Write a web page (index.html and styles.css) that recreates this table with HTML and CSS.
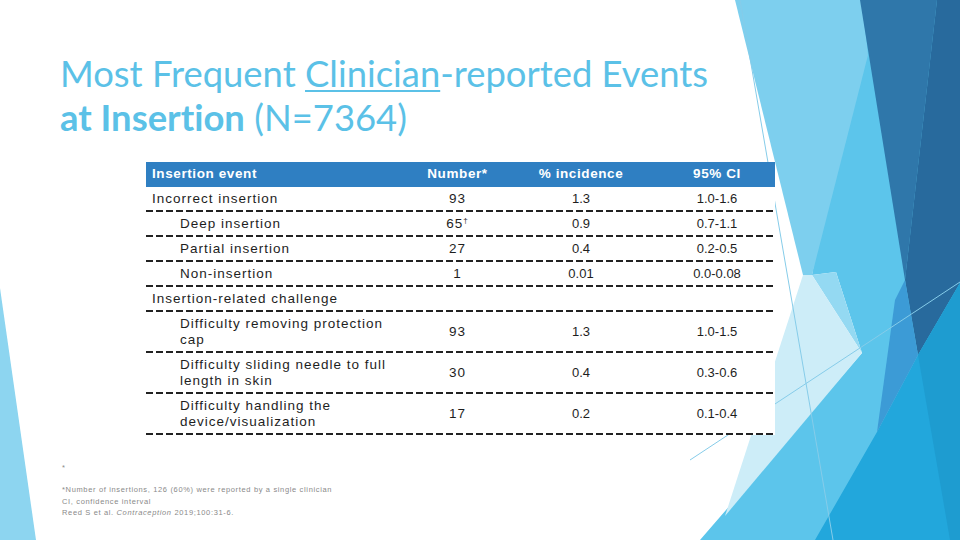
FILE: index.html
```html
<!DOCTYPE html>
<html>
<head>
<meta charset="utf-8">
<link rel="stylesheet" href="styles.css">
</head>
<body>
<div class="slide">
  <svg class="bg" viewBox="0 0 960 540" width="960" height="540" aria-hidden="true">
    <polygon points="0,288 36,540 0,540" fill="#8dd5f0"/>
    <polygon points="860,0 960,0 960,540 700,540 862,353 836,272 812,275" fill="#5cc5eb"/>
    <polygon points="812,275 836,272 862,353" fill="#94d9f2"/>
    <polygon points="735,0 862,0 868,55 812,275 803,275" fill="#7dcfee"/>
    <polygon points="803,275 812,275 862,353 725,516" fill="#cdedf8"/>
    <polygon points="860,0 937,0 905,280" fill="#2f77aa"/>
    <polygon points="937,0 960,0 960,283 918,355 905,280" fill="#286a9d"/>
    <polygon points="815,540 877,432 918,355 960,283 960,540" fill="#22a7dc"/>
    <polygon points="877,432 895,300 905,280 918,355" fill="#3c9bd6"/>
    <polygon points="918,355 960,283 960,540 950,540" fill="#1e9cd0"/>
    <line x1="740" y1="0" x2="833" y2="540" stroke="#86cce9" stroke-width="1"/>
    <line x1="690" y1="460" x2="960" y2="282" stroke="#86cce9" stroke-width="1"/>
  </svg>
  <div class="content">
    <h1 class="title">Most Frequent <span class="ul">Clinician</span>-reported Events<br><b>at Insertion</b> (N=7364)</h1>
    <div class="tbl">
      <div class="row head">
        <div class="c1">Insertion event</div>
        <div class="c2">Number*</div>
        <div class="c3">% incidence</div>
        <div class="c4">95% CI</div>
      </div>
      <div class="row">
        <div class="c1">Incorrect insertion</div>
        <div class="c2">93</div>
        <div class="c3">1.3</div>
        <div class="c4">1.0-1.6</div>
      </div>
      <div class="row">
        <div class="c1 ind">Deep insertion</div>
        <div class="c2">65<sup>†</sup></div>
        <div class="c3">0.9</div>
        <div class="c4">0.7-1.1</div>
      </div>
      <div class="row">
        <div class="c1 ind">Partial insertion</div>
        <div class="c2">27</div>
        <div class="c3">0.4</div>
        <div class="c4">0.2-0.5</div>
      </div>
      <div class="row">
        <div class="c1 ind">Non-insertion</div>
        <div class="c2">1</div>
        <div class="c3">0.01</div>
        <div class="c4">0.0-0.08</div>
      </div>
      <div class="row">
        <div class="c1">Insertion-related challenge</div>
        <div class="c2"></div>
        <div class="c3"></div>
        <div class="c4"></div>
      </div>
      <div class="row">
        <div class="c1 ind">Difficulty removing protection<br>cap</div>
        <div class="c2">93</div>
        <div class="c3">1.3</div>
        <div class="c4">1.0-1.5</div>
      </div>
      <div class="row">
        <div class="c1 ind">Difficulty sliding needle to full<br>length in skin</div>
        <div class="c2">30</div>
        <div class="c3">0.4</div>
        <div class="c4">0.3-0.6</div>
      </div>
      <div class="row">
        <div class="c1 ind">Difficulty handling the<br>device/visualization</div>
        <div class="c2">17</div>
        <div class="c3">0.2</div>
        <div class="c4">0.1-0.4</div>
      </div>
    </div>
    <div class="notes">
      <p class="star">*</p>
      <p>*Number of insertions, 126 (60%) were reported by a single clinician<br>CI, confidence interval<br>Reed S et al. <i>Contraception</i> 2019;100:31-6.</p>
    </div>
  </div>
</div>
</body>
</html>
```
FILE: styles.css
```css
html, body {
  margin: 0;
  padding: 0;
  background: #fff;
}
.slide {
  position: relative;
  width: 960px;
  height: 540px;
  overflow: hidden;
  background: #fff;
}
.bg {
  position: absolute;
  left: 0;
  top: 0;
}
.content {
  position: relative;
  padding-top: 51px;
}
.title {
  margin: 0 0 0 60px;
  font-family: "Lato", "Open Sans", sans-serif;
  font-weight: 400;
  font-size: 36.4px;
  line-height: 44px;
  color: #5bc1e7;
  font-variant-ligatures: none;
}
.title b {
  font-weight: 700;
}
.ul {
  text-decoration: underline;
  text-decoration-thickness: 2px;
  text-underline-offset: 3px;
}
.tbl {
  margin: 23px 0 0 146px;
  width: 629px;
  background: #fff;
  font-family: "Liberation Sans", Arial, sans-serif;
  font-size: 13px;
  color: #1e1e1e;
}
.row {
  display: grid;
  grid-template-columns: 254px 115px 132px 128px;
  align-items: center;
  padding: 4px 0 5px;
  line-height: 16px;
  background-image: repeating-linear-gradient(90deg, #222 0 7px, transparent 7px 10px);
  background-size: 100% 2px;
  background-position: left bottom;
  background-repeat: no-repeat;
}
.row .c1, .row .c2 {
  font-size: 13.5px;
  letter-spacing: 1px;
}
.row.head {
  background: #2f7fc2;
  color: #fff;
  font-weight: 700;
  padding: 4px 0 5px;
}
.row.head > div {
  font-size: 13.5px;
  letter-spacing: 0.6px;
}
.row:nth-child(2) {
  padding-top: 4px;
}
.c1 {
  padding-left: 6px;
}
.c1.ind {
  padding-left: 34px;
}
.c2, .c3 {
  text-align: center;
}
.c4 {
  text-align: center;
  padding-left: 12px;
}
sup {
  font-size: 8px;
  line-height: 0;
  vertical-align: 5px;
}
.notes {
  margin: 29px 0 0 62px;
  font-family: "Liberation Sans", Arial, sans-serif;
  font-size: 7.5px;
  letter-spacing: 0.65px;
  line-height: 11.5px;
  color: #8a8a8a;
}
.notes p {
  margin: 0;
}
.notes .star {
  line-height: 8px;
  margin-bottom: 12px;
}
```
